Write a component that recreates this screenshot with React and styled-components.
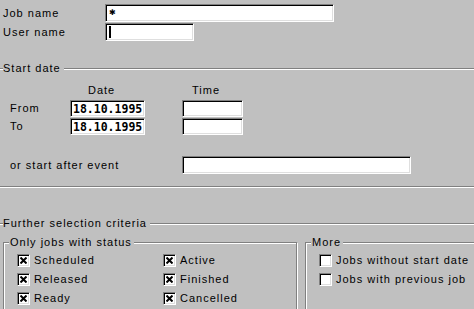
import React from 'react';
import styled, { createGlobalStyle } from 'styled-components';

const GlobalStyle = createGlobalStyle`
    html, body {
        margin: 0;
        padding: 0;
        background: #c0c0c0;
    }
    #root {
        width: 474px;
        height: 309px;
        overflow: hidden;
    }
`;

const Screen = styled.div`
    width: 474px;
    height: 309px;
    overflow: hidden;
    background: #c0c0c0;
    color: #000;
    font-family: 'Liberation Sans', Arial, sans-serif;
    font-size: 11px;
    letter-spacing: 1px;
`;

const TopForm = styled.div`
    display: grid;
    grid-template-columns: 102px auto;
    row-gap: 1px;
    align-items: center;
    padding: 4px 0 0 3px;
`;

const Label = styled.span`
    line-height: 13px;
    white-space: nowrap;
`;

const Field = styled.div`
    box-sizing: border-box;
    width: ${p => p.$width}px;
    height: ${p => p.$height || 18}px;
    background: #fff;
    border: 1px solid;
    border-color: #808080 #fff #fff #808080;
    box-shadow: inset 1px 1px #000, inset -1px -1px #dfdfdf;
    display: flex;
    align-items: center;
    padding-left: 2px;
    font-family: 'DejaVu Sans Mono', 'Liberation Mono', monospace;
    font-weight: bold;
    font-size: 11.5px;
    letter-spacing: 0;
`;

const Caret = styled.span`
    display: block;
    width: 2px;
    height: 12px;
    margin-left: 1px;
    background: #000;
`;

const Star = styled.span`
    font-family: 'DejaVu Sans', sans-serif;
    font-size: 8px;
    line-height: 8px;
    margin-left: 1px;
`;

const Heading = styled.div`
    display: flex;
    align-items: center;
    margin-top: ${p => p.$top}px;
    line-height: 13px;
    white-space: nowrap;

    &::before,
    &::after {
        content: '';
        border-top: 1px solid #808080;
        border-bottom: 1px solid #fff;
        height: 0;
    }
    &::before {
        width: 3px;
    }
    &::after {
        flex: 1;
        margin-left: 3px;
    }
`;

const Separator = styled.div`
    margin-top: ${p => p.$top}px;
    border-top: 1px solid #808080;
    border-bottom: 1px solid #fff;
`;

const DateGrid = styled.div`
    display: grid;
    grid-template-columns: 60px 75px 37px auto;
    align-items: center;
    padding: 9px 0 0 10px;
    row-gap: 1px;
`;

const ColumnHead = styled.span`
    line-height: 13px;
    padding-left: ${p => p.$indent}px;
    margin-bottom: 2px;
`;

const EventLabel = styled.span`
    grid-column: 1 / 4;
    margin-top: 20px;
    line-height: 13px;
`;

const EventField = styled(Field)`
    grid-column: 4;
    margin-top: 20px;
`;

const Groups = styled.div`
    display: flex;
    gap: 8px;
    padding-left: 3px;
    margin-top: 12px;
    margin-right: -20px;
`;

const Group = styled.div`
    box-sizing: border-box;
    width: ${p => (p.$width ? `${p.$width}px` : 'auto')};
    flex: ${p => (p.$width ? 'none' : 1)};
    height: 120px;
    border: 1px solid #808080;
    box-shadow: inset 1px 1px #fff, 1px 1px #fff;
`;

const Legend = styled.div`
    display: table;
    margin: -7px 0 0 5px;
    padding: 0 2px 0 1px;
    background: #c0c0c0;
    line-height: 13px;
`;

const CheckGrid = styled.div`
    display: grid;
    grid-template-columns: ${p => p.$columns};
    row-gap: 6px;
    padding-left: 13px;
    margin-top: 5px;
`;

const CheckRow = styled.div`
    display: flex;
    align-items: center;
    gap: 4px;
    line-height: 13px;
    white-space: nowrap;
`;

const Box = styled.span`
    box-sizing: border-box;
    width: 13px;
    height: 13px;
    flex: none;
    background: #fff;
    border: 1px solid;
    border-color: #808080 #fff #fff #808080;
    box-shadow: inset 1px 1px #000, inset -1px -1px #dfdfdf;
    display: flex;
    align-items: center;
    justify-content: center;
`;

const Check = ({ checked, children }) => (
    <CheckRow>
        <Box>
            {checked && (
                <svg width="7" height="7" viewBox="0 0 7 7">
                    <path d="M0.5 0.5 L6.5 6.5 M6.5 0.5 L0.5 6.5" stroke="#000" strokeWidth="2" />
                </svg>
            )}
        </Box>
        {children}
    </CheckRow>
);

const statuses = ['Scheduled', 'Active', 'Released', 'Finished', 'Ready', 'Cancelled'];

export default function App() {
    return (
        <Screen>
            <GlobalStyle />
            <TopForm>
                <Label>Job name</Label>
                <Field $width={229}>
                    <Star>✱</Star>
                </Field>
                <Label>User name</Label>
                <Field $width={89}>
                    <Caret />
                </Field>
            </TopForm>

            <Heading $top={21}>Start date</Heading>

            <DateGrid>
                <span />
                <ColumnHead $indent={18}>Date</ColumnHead>
                <span />
                <ColumnHead $indent={10}>Time</ColumnHead>

                <Label>From</Label>
                <Field $width={75} $height={17}>18.10.1995</Field>
                <span />
                <Field $width={61} $height={17} />

                <Label>To</Label>
                <Field $width={75} $height={17}>18.10.1995</Field>
                <span />
                <Field $width={61} $height={17} />

                <EventLabel>or start after event</EventLabel>
                <EventField $width={229} />
            </DateGrid>

            <Separator $top={12} />

            <Heading $top={29}>Further selection criteria</Heading>

            <Groups>
                <Group $width={294}>
                    <Legend>Only jobs with status</Legend>
                    <CheckGrid $columns="146px auto">
                        {statuses.map(s => (
                            <Check key={s} checked>
                                {s}
                            </Check>
                        ))}
                    </CheckGrid>
                </Group>
                <Group>
                    <Legend>More</Legend>
                    <CheckGrid $columns="auto">
                        <Check>Jobs without start date</Check>
                        <Check>Jobs with previous job</Check>
                    </CheckGrid>
                </Group>
            </Groups>
        </Screen>
    );
}
